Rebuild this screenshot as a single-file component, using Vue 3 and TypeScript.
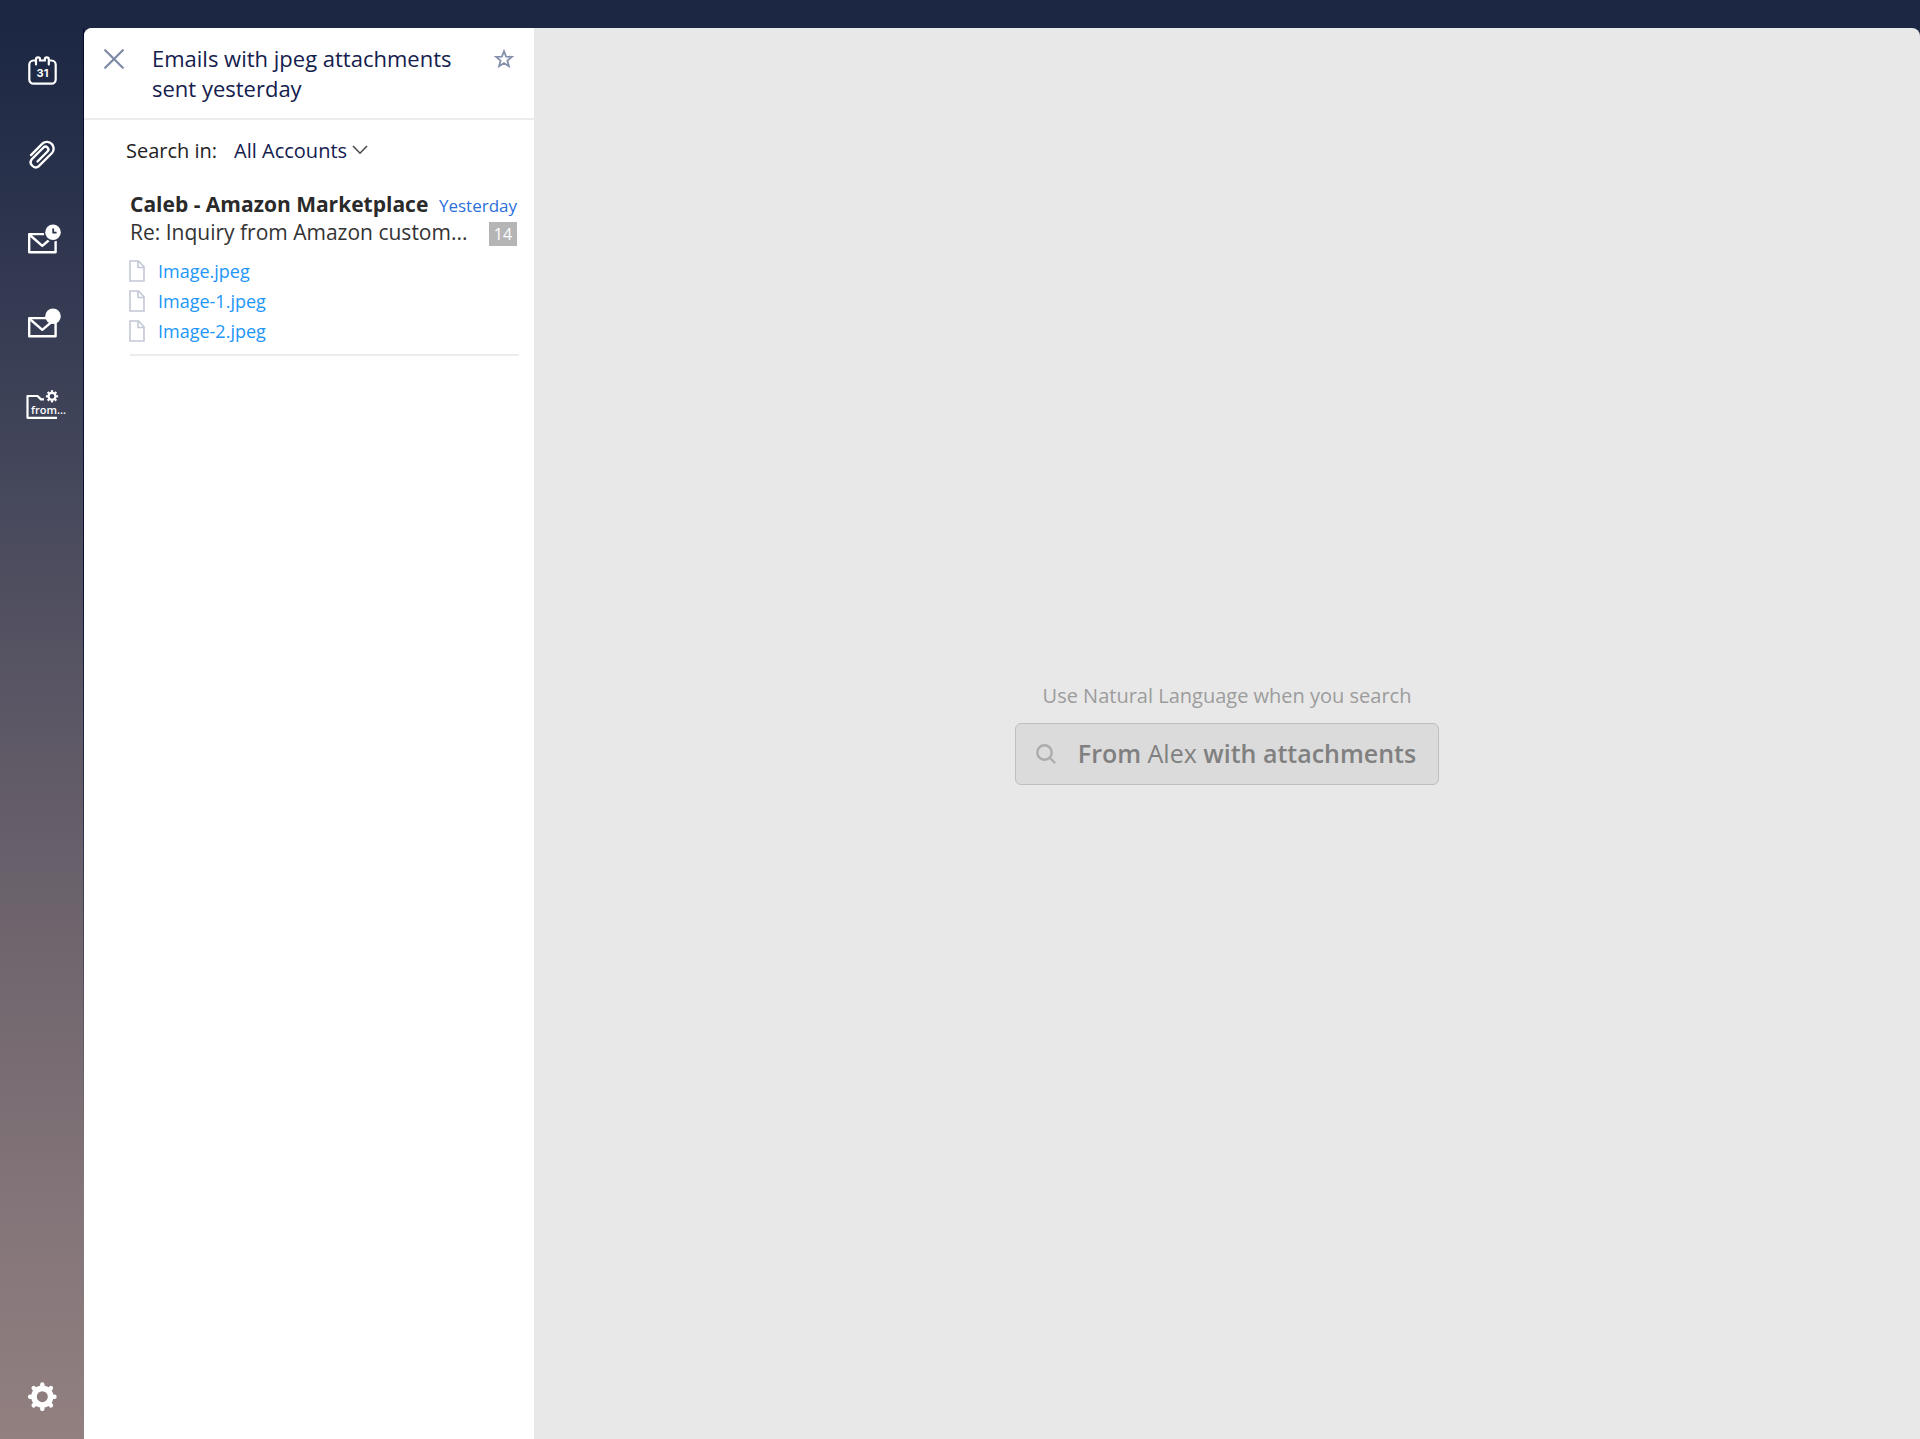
<script setup lang="ts">
import { ref } from 'vue'

const account = ref('All Accounts')
const files: string[] = ['Image.jpeg', 'Image-1.jpeg', 'Image-2.jpeg']
const teeth: number[] = [0, 45, 90, 135, 180, 225, 270, 315]
</script>

<template>
  <div class="app">
    <nav class="rail" aria-label="Main">
      <button class="rail-btn" type="button" aria-label="Calendar">
        <svg viewBox="0 0 84 84" fill="none" stroke="#fff" stroke-width="2.200" stroke-linecap="round">
          <path d="M36 32.5h-2.500a4.200 4.200 0 0 0-4.200 4.200v14.800a4.200 4.200 0 0 0 4.200 4.200h18a4.200 4.200 0 0 0 4.200-4.200V36.700a4.200 4.200 0 0 0-4.200-4.200H49.500" />
          <path d="M36 36.500v-5.200a2 2 0 0 1 4 0v1.200h4.800v-1.200a2 2 0 0 1 4 0v5.200" />
          <text x="42.500" y="49" class="day" text-anchor="middle">31</text>
        </svg>
      </button>
      <button class="rail-btn" type="button" aria-label="Attachments">
        <svg viewBox="0 0 84 84" fill="none" stroke="#fff" stroke-width="2.400" stroke-linecap="round">
          <path d="M31 43.100 42.600 31.500A6.700 6.700 0 0 1 52 41L38.800 54.200A5 5 0 0 1 31.800 47.200L43.500 35.500A2.800 2.800 0 0 1 47.500 39.500L37.500 49.500" />
        </svg>
      </button>
      <button class="rail-btn" type="button" aria-label="Snoozed mail">
        <svg viewBox="0 0 84 84" fill="none" stroke="#fff" stroke-width="2.400" stroke-linejoin="round">
          <mask id="clock-gap" maskUnits="userSpaceOnUse" x="0" y="0" width="84" height="84">
            <rect width="84" height="84" fill="#fff" stroke="none" />
            <circle cx="53" cy="36.300" r="9.300" fill="#000" stroke="none" />
          </mask>
          <g mask="url(#clock-gap)">
            <path d="M29.200 38.100h26.400v18.200H29.200z" />
            <path d="M29.800 39 42.300 49.800 55 39" />
          </g>
          <circle cx="53" cy="36.300" r="7.800" fill="#fff" stroke="none" />
          <path d="M53.200 32.500v4.200h3.400" stroke="#2d354d" stroke-width="1.800" />
        </svg>
      </button>
      <button class="rail-btn" type="button" aria-label="Unread mail">
        <svg viewBox="0 0 84 84" fill="none" stroke="#fff" stroke-width="2.400" stroke-linejoin="round">
          <path d="M29.200 38.100h26.400v18.200H29.200z" />
          <path d="M29.800 39 42.300 49.800 55 39" />
          <circle cx="53" cy="36.300" r="7.800" fill="#fff" stroke="none" />
        </svg>
      </button>
      <button class="rail-btn" type="button" aria-label="Smart folder">
        <svg viewBox="0 0 84 84" fill="none" stroke="#fff" stroke-width="2.200" stroke-linejoin="round">
          <path d="M57 53.800H27.500V32H37.500L41 35.400H44" />
          <circle cx="52" cy="32.300" r="3.500" stroke-width="2.200" />
          <path
            v-for="a in teeth"
            :key="a"
            d="M52 28.200v-2"
            :transform="`rotate(${a} 52 32.300)`"
          />
          <text x="31" y="50" class="folder-name">from...</text>
        </svg>
      </button>
      <button class="rail-btn settings" type="button" aria-label="Settings">
        <svg viewBox="0 0 84 84" fill="none" stroke="#fff" stroke-linecap="round">
          <circle cx="42.300" cy="41.700" r="8.300" stroke-width="5.600" />
          <path
            v-for="a in teeth"
            :key="a"
            d="M42.300 31.700v-2.200"
            stroke-width="4.400"
            :transform="`rotate(${a} 42.300 41.700)`"
          />
        </svg>
      </button>
    </nav>

    <div class="window">
      <section class="results">
        <header class="head">
          <button class="icon-btn close" type="button" aria-label="Close">
            <svg width="20" height="20" viewBox="0 0 20 20" fill="none" stroke="#7d89a6" stroke-width="2.200" stroke-linecap="round">
              <path d="M1.200 1.200 18.800 18.800M18.800 1.200 1.200 18.800" />
            </svg>
          </button>
          <h1>Emails with jpeg attachments sent yesterday</h1>
          <button class="icon-btn star" type="button" aria-label="Save search">
            <svg width="20" height="20" viewBox="0 0 20 20" fill="none" stroke="#8490ac" stroke-width="1.800">
              <path d="M10 2.200 12.100 7.600 17.900 7.900 13.400 11.500 14.900 17.200 10 14 5.100 17.200 6.600 11.500 2.100 7.900 7.900 7.600Z" />
            </svg>
          </button>
        </header>

        <div class="scope">
          <label for="account">Search in:</label>
          <select id="account" v-model="account">
            <option>All Accounts</option>
          </select>
          <svg class="chevron" width="16" height="10" viewBox="0 0 16 10" fill="none" stroke="#4a4a4a" stroke-width="1.600">
            <path d="M1 1 8 8.200 15 1" />
          </svg>
        </div>

        <article class="mail">
          <div class="row">
            <h2>Caleb - Amazon Marketplace</h2>
            <time>Yesterday</time>
          </div>
          <div class="row">
            <p class="subject">Re: Inquiry from Amazon custom...</p>
            <span class="count">14</span>
          </div>
          <ul class="files">
            <li v-for="f in files" :key="f">
              <svg width="16" height="22" viewBox="0 0 16 22" fill="none" stroke="#c3c8d6" stroke-width="1.600">
                <path d="M1 1H9.500L15 6.800V21H1ZM9 1V7.500H15" />
              </svg>
              <a href="#">{{ f }}</a>
            </li>
          </ul>
        </article>
      </section>

      <main class="detail">
        <p class="hint">Use Natural Language when you search</p>
        <button class="example" type="button">
          <svg width="20" height="20" viewBox="0 0 20 20" fill="none" stroke="#acacac" stroke-width="2.400" stroke-linecap="round">
            <circle cx="8.500" cy="8.500" r="7.200" />
            <path d="M14 14 18.500 18.500" />
          </svg>
          <span><b>From</b> Alex <b>with attachments</b></span>
        </button>
      </main>
    </div>
  </div>
</template>

<style>
body {
  margin: 0;
}
</style>

<style scoped>
.app {
  display: flex;
  box-sizing: border-box;
  min-height: 100vh;
  padding-top: 28px;
  background: linear-gradient(#1b2743 0%, #1c2743 2%, #2b334c 14%, #404459 30%, #5f5966 52%, #746970 70%, #85767a 86%, #928080 100%);
  font-family: "Open Sans", "Noto Sans", sans-serif;
}

button {
  padding: 0;
  border: 0;
  background: none;
  font: inherit;
  cursor: pointer;
}

h1,
h2,
p,
ul {
  margin: 0;
  padding: 0;
}

.rail {
  display: flex;
  flex: none;
  flex-direction: column;
  width: 84px;
  background: linear-gradient(#000a2e, #0a1038 40%, transparent 80%) right / 1px 100% no-repeat;
}

.rail-btn {
  width: 84px;
  height: 84px;
}

.rail-btn svg {
  display: block;
}

.settings {
  margin-top: auto;
}

.day {
  fill: #fff;
  stroke: none;
  font: 700 11px Inter, sans-serif;
}

.folder-name {
  fill: #fff;
  stroke: none;
  font: 600 11px "Open Sans", sans-serif;
}

.window {
  display: flex;
  flex: 1;
  overflow: hidden;
  border-radius: 8px 8px 0 0;
  background: #e8e8e8;
}

.results {
  flex: none;
  width: 450px;
  background: #fff;
}

.head {
  display: flex;
  align-items: flex-start;
  box-sizing: border-box;
  height: 92px;
  padding: 15px 20px 0;
  border-bottom: 2px solid #ececec;
}

.icon-btn {
  flex: none;
  width: 20px;
  height: 32px;
}

.icon-btn svg {
  display: block;
  margin: auto;
}

h1 {
  flex: 1;
  margin: 0 28px;
  color: #14204d;
  font-size: 22px;
  font-weight: 400;
  line-height: 30px;
}

.scope {
  display: flex;
  align-items: center;
  height: 60px;
  padding-left: 42px;
  color: #222;
  font-size: 20px;
}

.scope select {
  margin-left: 17px;
  padding: 0;
  border: 0;
  background: none;
  color: #14204d;
  font: inherit;
  appearance: none;
}

.chevron {
  margin-left: 5px;
  pointer-events: none;
}

.mail {
  margin: 10px 15px 0 46px;
  padding-bottom: 8px;
  border-bottom: 2px solid #ececec;
}

.row {
  display: flex;
  align-items: baseline;
  justify-content: space-between;
  height: 28px;
  padding-right: 2px;
  line-height: 28px;
  white-space: nowrap;
}

h2 {
  color: #2a2a2a;
  font-size: 21px;
  font-weight: 700;
}

time {
  color: #2a6fdb;
  font-size: 17px;
}

.subject {
  color: #333;
  font-size: 21px;
}

.count {
  align-self: flex-end;
  width: 28px;
  background: #b5b5b5;
  color: #fff;
  font-size: 16px;
  line-height: 24px;
  text-align: center;
}

.files {
  padding-top: 10px;
  list-style: none;
}

.files li {
  display: flex;
  gap: 13px;
  align-items: center;
  height: 30px;
  margin-left: -1px;
}

.files a {
  color: #2196f8;
  font-size: 18px;
  text-decoration: none;
}

.detail {
  display: flex;
  flex: 1;
  flex-direction: column;
  align-items: center;
  justify-content: center;
}

.hint {
  color: #9c9c9c;
  font-size: 20px;
  line-height: 26px;
}

.example {
  display: flex;
  gap: 22px;
  align-items: center;
  height: 62px;
  margin-top: 14px;
  padding: 0 22px 0 20px;
  border: 1px solid #bfbfbf;
  border-radius: 6px;
  background: #dbdbdb;
  color: #808080;
  font-size: 25px;
}

.example span {
  padding-bottom: 2px;
}

.example b {
  font-weight: 600;
}
</style>
